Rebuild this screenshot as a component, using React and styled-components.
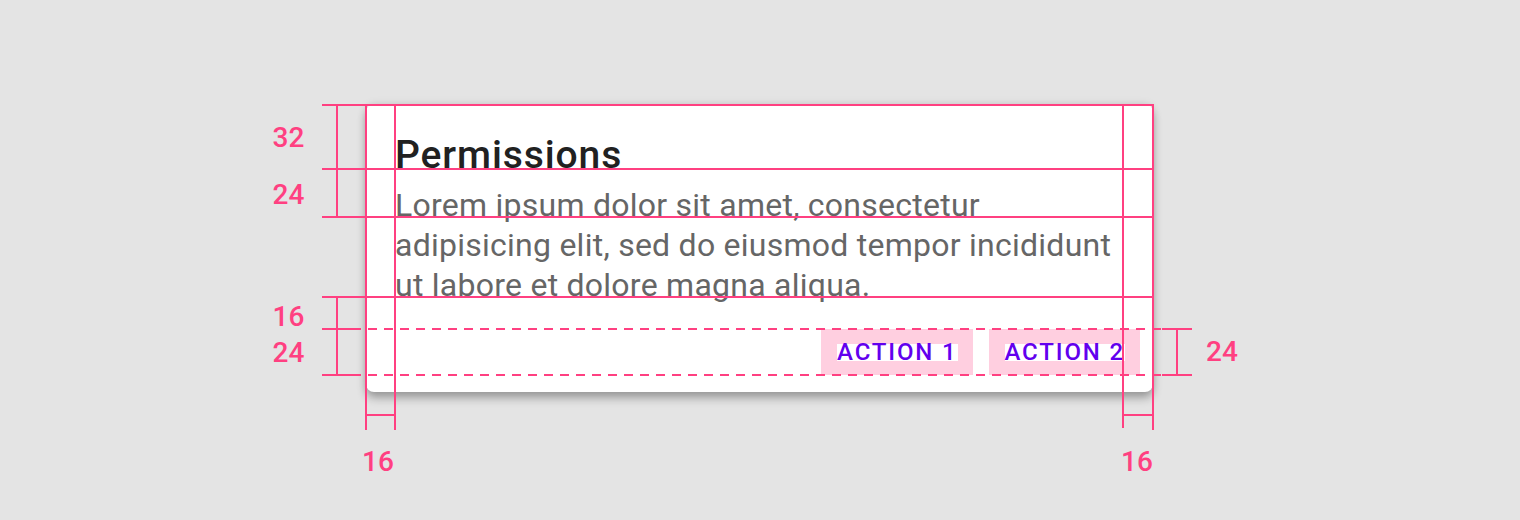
import React from "react";
import styled, { createGlobalStyle } from "styled-components";

const PINK = "#ff4081";

const GlobalStyle = createGlobalStyle`
  body {
    margin: 0;
    background: #e4e4e4;
    font-family: Roboto, "Liberation Sans", sans-serif;
  }
`;

// Page canvas: the dialog sits in flow, the redlines are drawn over it
const Page = styled.div`
  position: relative;
  width: 1520px;
  height: 520px;
  box-sizing: border-box;
  padding: 104px 0 0 366px;
  overflow: hidden;
`;

const Dialog = styled.div`
  width: 787px;
  height: 288px;
  box-sizing: border-box;
  background: #fff;
  border-radius: 8px;
  box-shadow: 0 6px 10px rgba(0, 0, 0, 0.3), 0 0 8px rgba(0, 0, 0, 0.1);
  display: flex;
  flex-direction: column;
`;

const Content = styled.div`
  padding: 28px 30px 0 29px;
`;

const Title = styled.h2`
  margin: 0;
  font-size: 39px;
  line-height: 46px;
  font-weight: 500;
  letter-spacing: 0.9px;
  color: #212121;
`;

const Body = styled.p`
  margin: 7px 9px 0 0;
  font-size: 32px;
  line-height: 40px;
  letter-spacing: 0.25px;
  color: #666;
`;

const Actions = styled.div`
  display: flex;
  justify-content: flex-end;
  gap: 16px;
  padding: 24px 13px 0 0;
`;

const Button = styled.button`
  display: flex;
  align-items: center;
  justify-content: center;
  height: 46px;
  padding: 0 15px 0 16px;
  border: none;
  border-radius: 0;
  background: #ffcfe0;
  font-family: inherit;
  cursor: pointer;
`;

const ButtonText = styled.span`
  display: inline-block;
  height: 17px;
  line-height: 17px;
  background: #fff;
  color: #6200ee;
  font-size: 24px;
  font-weight: 500;
  letter-spacing: 1.85px;
`;

// Redline overlay parts
const HLine = styled.div`
  position: absolute;
  left: ${(p) => p.$x1}px;
  width: ${(p) => p.$x2 - p.$x1}px;
  top: ${(p) => p.$y}px;
  height: 2px;
  background: ${(p) =>
    p.$dashed
      ? `repeating-linear-gradient(to right, ${PINK} 0 9px, transparent 9px 16px)`
      : PINK};
`;

const VLine = styled.div`
  position: absolute;
  left: ${(p) => p.$x}px;
  top: ${(p) => p.$y1}px;
  height: ${(p) => p.$y2 - p.$y1}px;
  width: 2px;
  background: ${PINK};
`;

const Label = styled.span`
  position: absolute;
  left: ${(p) => p.$x}px;
  top: ${(p) => p.$y}px;
  transform: translate(-50%, -50%);
  font-size: 28px;
  line-height: 1;
  font-weight: 500;
  color: ${PINK};
`;

const hLines = [
  { x1: 322, x2: 1154, y: 104 },
  { x1: 322, x2: 1154, y: 168 },
  { x1: 322, x2: 1154, y: 216 },
  { x1: 322, x2: 1154, y: 296 },
  { x1: 322, x2: 352, y: 328 },
  { x1: 322, x2: 352, y: 374 },
  { x1: 352, x2: 1162, y: 328, dashed: true },
  { x1: 352, x2: 1162, y: 374, dashed: true },
  { x1: 1162, x2: 1192, y: 328 },
  { x1: 1162, x2: 1192, y: 374 },
  { x1: 365, x2: 396, y: 414 },
  { x1: 1122, x2: 1154, y: 414 },
];

const vLines = [
  { x: 336, y1: 104, y2: 218 },
  { x: 336, y1: 296, y2: 376 },
  { x: 365, y1: 104, y2: 430 },
  { x: 394, y1: 104, y2: 430 },
  { x: 1122, y1: 104, y2: 428 },
  { x: 1152, y1: 104, y2: 430 },
  { x: 1176, y1: 328, y2: 376 },
];

const labels = [
  { x: 288.5, y: 138, text: "32" },
  { x: 288.5, y: 195, text: "24" },
  { x: 288.5, y: 316.5, text: "16" },
  { x: 288.5, y: 353, text: "24" },
  { x: 378, y: 462, text: "16" },
  { x: 1137, y: 462, text: "16" },
  { x: 1222, y: 352, text: "24" },
];

const App = () => {
  return (
    <>
      <GlobalStyle />
      <Page>
        <Dialog>
          <Content>
            <Title>Permissions</Title>
            <Body>
              Lorem ipsum dolor sit amet, consectetur adipisicing elit, sed do
              eiusmod tempor incididunt ut labore et dolore magna aliqua.
            </Body>
          </Content>
          <Actions>
            <Button>
              <ButtonText>ACTION 1</ButtonText>
            </Button>
            <Button>
              <ButtonText>ACTION 2</ButtonText>
            </Button>
          </Actions>
        </Dialog>

        {hLines.map((l, i) => (
          <HLine key={"h" + i} $x1={l.x1} $x2={l.x2} $y={l.y} $dashed={l.dashed} />
        ))}
        {vLines.map((l, i) => (
          <VLine key={"v" + i} $x={l.x} $y1={l.y1} $y2={l.y2} />
        ))}
        {labels.map((l, i) => (
          <Label key={"l" + i} $x={l.x} $y={l.y}>
            {l.text}
          </Label>
        ))}
      </Page>
    </>
  );
};

export default App;
